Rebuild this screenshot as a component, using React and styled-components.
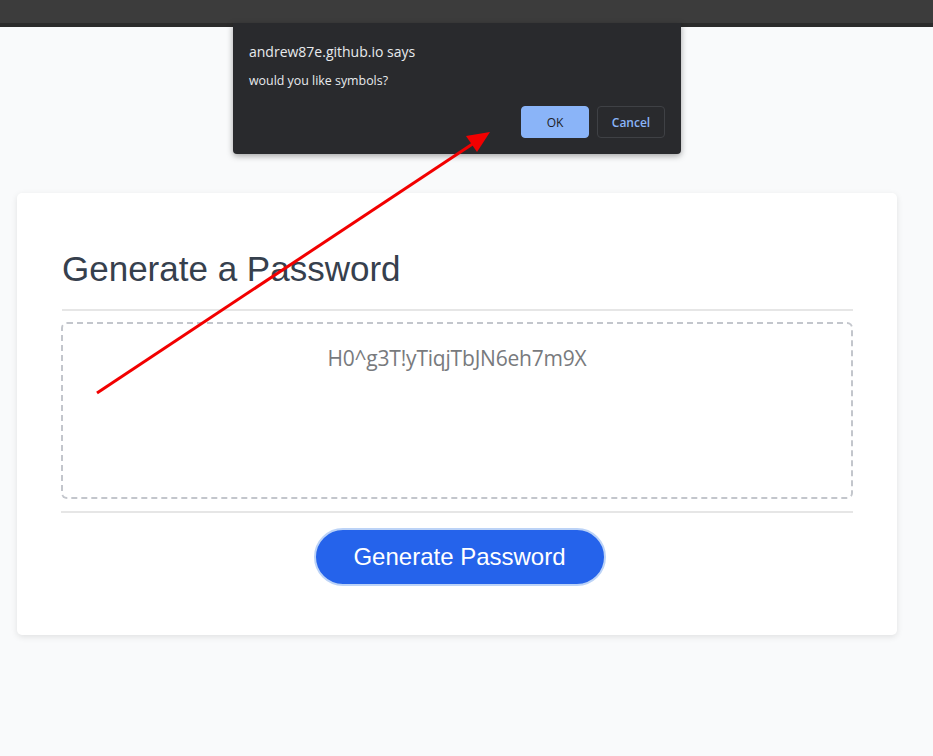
import styled, { createGlobalStyle } from "styled-components";

const GlobalStyle = createGlobalStyle`
  html, body {
    margin: 0;
    padding: 0;
    background: #f9fafb;
    font-family: "Liberation Sans", Arial, sans-serif;
  }
`;

const Page = styled.div`
  position: relative;
  width: 933px;
  height: 756px;
  overflow: hidden;
  background: #f9fafb;
`;

// 브라우저 상단 바
const BrowserBar = styled.div`
  height: 23px;
  background: #3c3c3c;
  border-bottom: 4px solid #2b2b2b;
`;

const Card = styled.section`
  width: 880px;
  margin: 166px 0 0 17px;
  box-sizing: border-box;
  padding: 56px 44px 49px 44px;
  background: #fff;
  border-radius: 5px;
  box-shadow: 0 2px 6px rgba(0, 0, 0, 0.1);
`;

const Title = styled.h2`
  margin: 0 0 0 1px;
  font-size: 35px;
  font-weight: 400;
  line-height: 40px;
  color: #36404d;
  padding-bottom: 20px;
  border-bottom: 2px solid #e6e6e6;
`;

const Body = styled.div`
  padding: 11px 0 12px;
  border-bottom: 2px solid #e6e6e6;
`;

const PasswordBox = styled.div`
  height: 177px;
  box-sizing: border-box;
  border: 2px dashed #c3c6cc;
  border-radius: 6px;
  padding-top: 20px;
  text-align: center;
  font-family: "Open Sans", "Noto Sans", sans-serif;
  font-size: 21px;
  color: #787a7d;
  letter-spacing: -0.2px;
`;

const Footer = styled.div`
  display: flex;
  justify-content: center;
  padding: 15px 0 0 5px;
`;

const GenerateButton = styled.button`
  width: 292px;
  height: 58px;
  border-radius: 29px;
  border: 2px solid #bcd3f7;
  background: #2563eb;
  color: #fff;
  font-family: "Liberation Sans", Arial, sans-serif;
  font-size: 24px;
  cursor: pointer;
`;

// alert 대화창
const Dialog = styled.div`
  position: absolute;
  left: 233px;
  top: 23px;
  width: 448px;
  height: 131px;
  box-sizing: border-box;
  padding: 20px 16px 0 16px;
  background: #292a2d;
  border-radius: 0 0 4px 4px;
  box-shadow: 0 2px 6px rgba(0, 0, 0, 0.35);
  font-family: "Open Sans", "Noto Sans", sans-serif;
  color: #e8eaed;
`;

const DialogTitle = styled.div`
  font-size: 14px;
  line-height: 18px;
`;

const DialogMessage = styled.div`
  margin-top: 12px;
  font-size: 12.4px;
  line-height: 16px;
`;

const DialogActions = styled.div`
  display: flex;
  justify-content: flex-end;
  gap: 8px;
  margin-top: 17px;
`;

const DialogButton = styled.button`
  width: 68px;
  height: 32px;
  border-radius: 4px;
  font-family: "Open Sans", "Noto Sans", sans-serif;
  font-size: 12px;
  font-weight: ${(p) => (p.$primary ? 400 : 600)};
  background: ${(p) => (p.$primary ? "#8ab4f8" : "transparent")};
  color: ${(p) => (p.$primary ? "#202124" : "#8ab4f8")};
  border: 1px solid ${(p) => (p.$primary ? "#8ab4f8" : "#3f4145")};
`;

const Arrow = styled.svg`
  position: absolute;
  left: 0;
  top: 0;
  pointer-events: none;
`;

const App = () => {
  return (
    <>
      <GlobalStyle />
      <Page>
        <BrowserBar />
        <Card>
          <Title>Generate a Password</Title>
          <Body>
            <PasswordBox>H0^g3T!yTiqjTbJN6eh7m9X</PasswordBox>
          </Body>
          <Footer>
            <GenerateButton>Generate Password</GenerateButton>
          </Footer>
        </Card>
        <Dialog>
          <DialogTitle>andrew87e.github.io says</DialogTitle>
          <DialogMessage>would you like symbols?</DialogMessage>
          <DialogActions>
            <DialogButton $primary>OK</DialogButton>
            <DialogButton>Cancel</DialogButton>
          </DialogActions>
        </Dialog>
        <Arrow width="933" height="756">
          <line x1="97" y1="393" x2="474" y2="143" stroke="#f20000" strokeWidth="3" />
          <polygon points="490,132 466,136 477,152" fill="#f20000" />
        </Arrow>
      </Page>
    </>
  );
};

export default App;
